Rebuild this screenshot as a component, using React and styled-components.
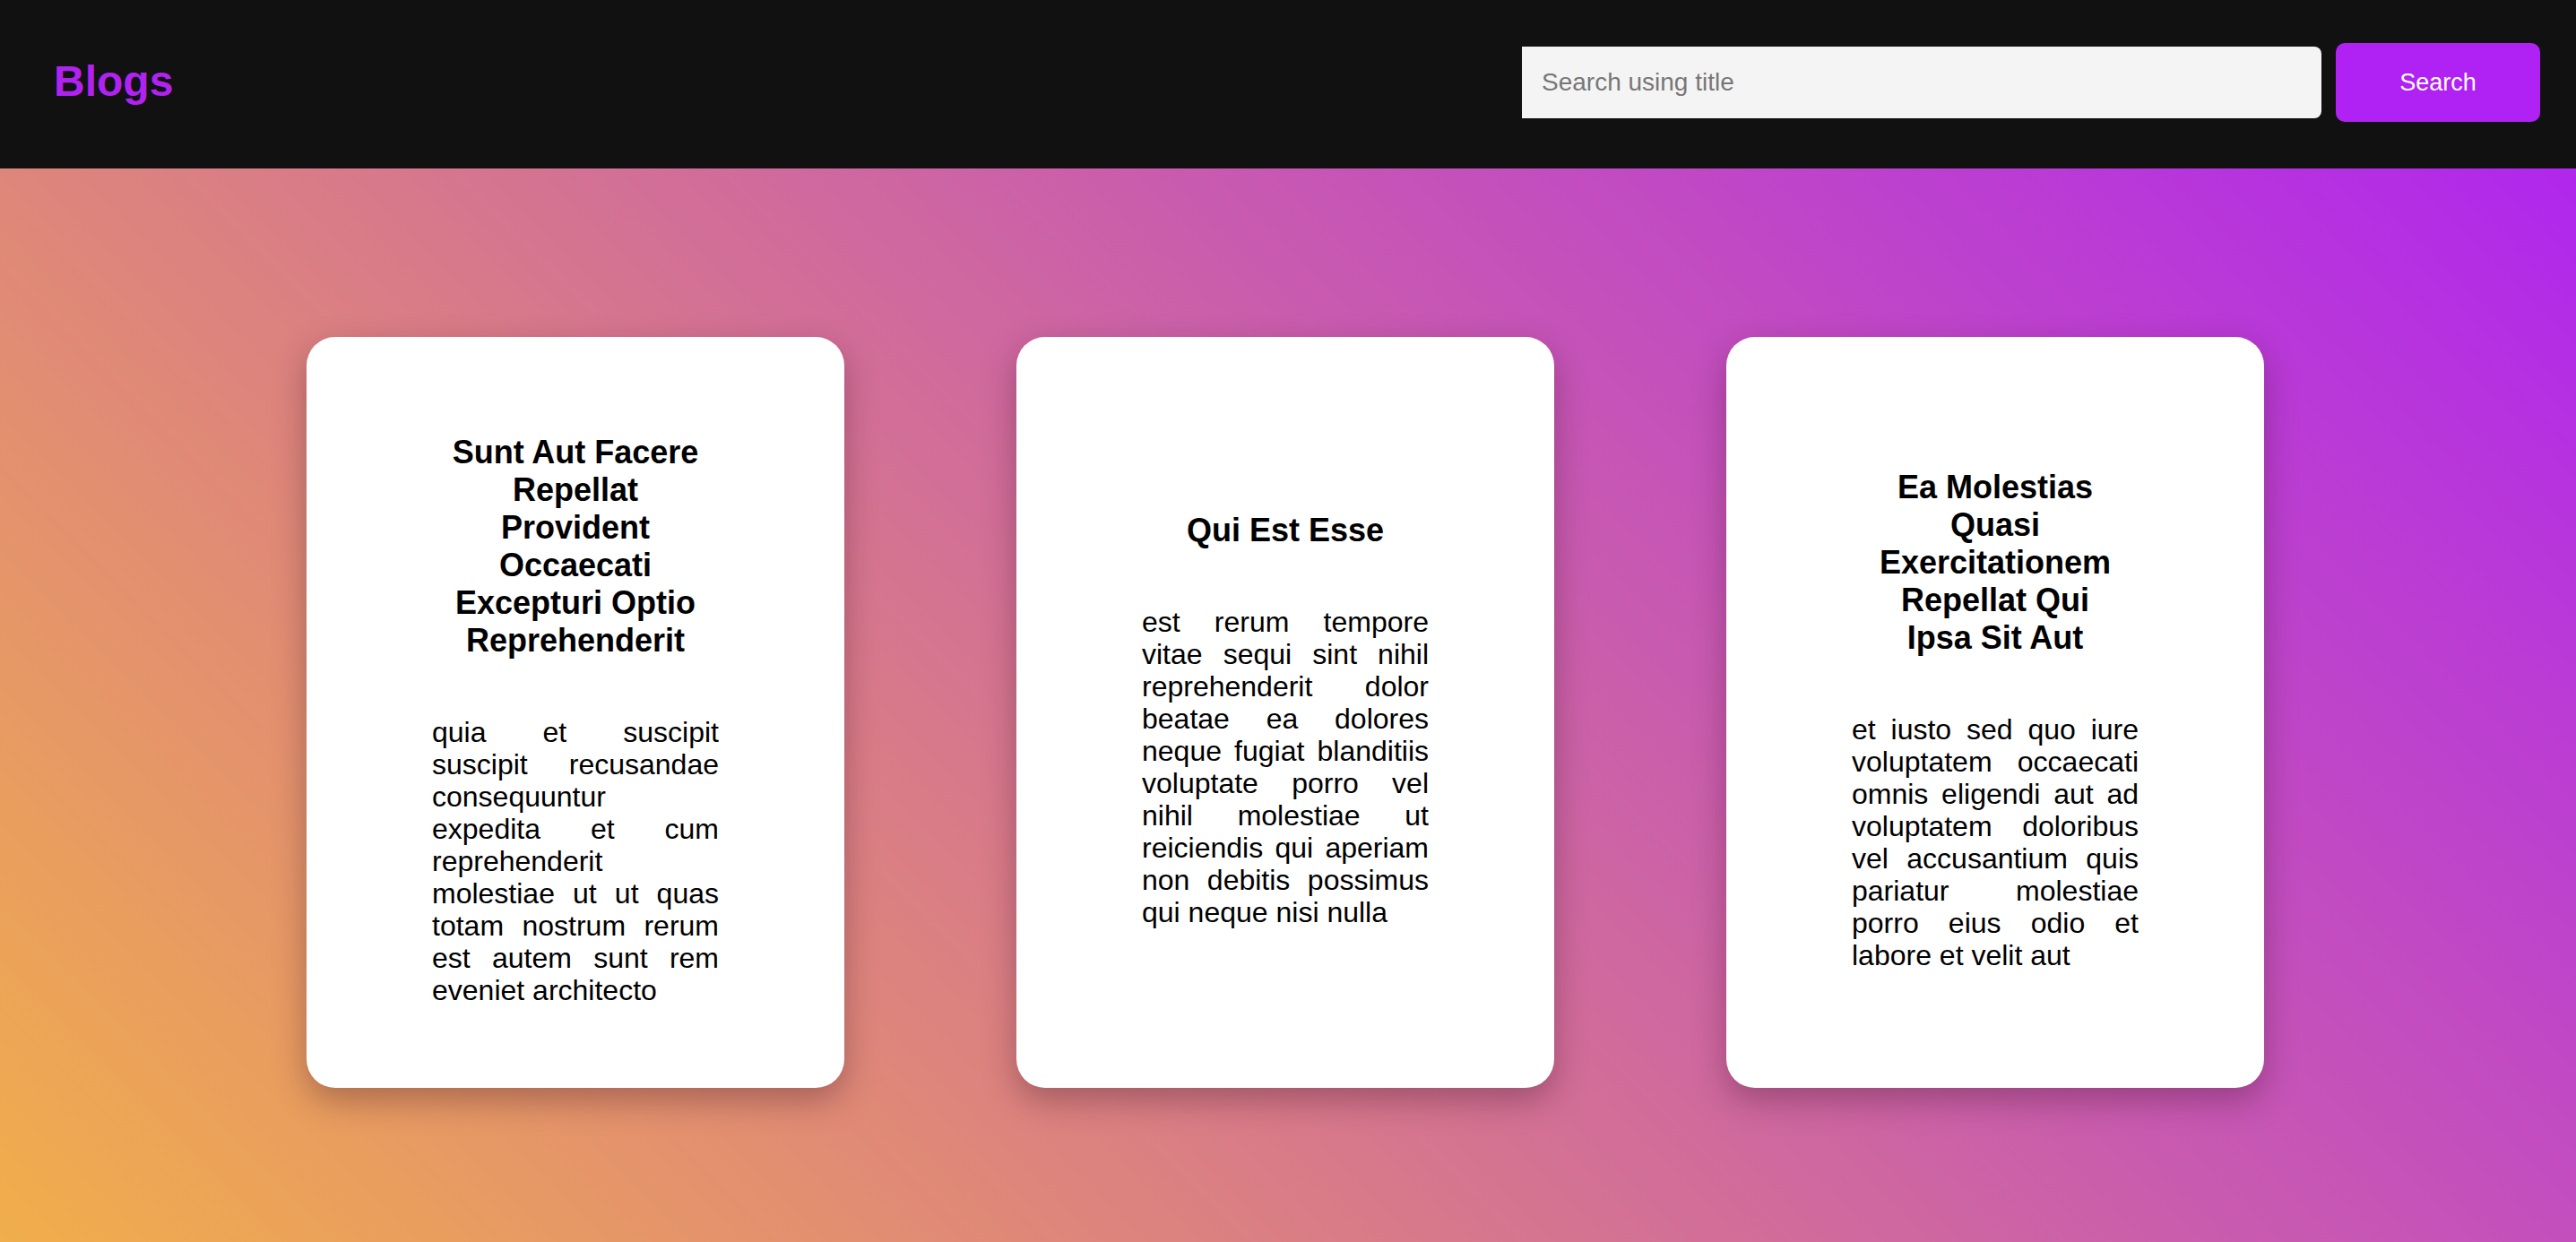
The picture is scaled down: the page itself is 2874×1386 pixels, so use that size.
import React from 'react';
import styled, { createGlobalStyle } from 'styled-components';

// Data
const posts = [
    {
        id: 1,
        title: 'Sunt Aut Facere Repellat Provident Occaecati Excepturi Optio Reprehenderit',
        body: 'quia et suscipit suscipit recusandae consequuntur expedita et cum reprehenderit molestiae ut ut quas totam nostrum rerum est autem sunt rem eveniet architecto',
    },
    {
        id: 2,
        title: 'Qui Est Esse',
        body: 'est rerum tempore vitae sequi sint nihil reprehenderit dolor beatae ea dolores neque fugiat blanditiis voluptate porro vel nihil molestiae ut reiciendis qui aperiam non debitis possimus qui neque nisi nulla',
    },
    {
        id: 3,
        title: 'Ea Molestias Quasi Exercitationem Repellat Qui Ipsa Sit Aut',
        body: 'et iusto sed quo iure voluptatem occaecati omnis eligendi aut ad voluptatem doloribus vel accusantium quis pariatur molestiae porro eius odio et labore et velit aut',
    },
];

// Styled
const GlobalStyle = createGlobalStyle`
    * {
        box-sizing: border-box;
    }

    body {
        margin: 0;
        font-family: 'Liberation Sans', Arial, Helvetica, sans-serif;
        background: #111111;
        overflow: hidden;
    }
`;

const Header = styled.header`
    height: 188px;
    background-color: #111111;
    display: flex;
    align-items: center;
    justify-content: space-between;
    padding: 0 40px 4px 60px;

    h1 {
        margin: 0 0 4px;
        color: #b022f0;
        font-size: 48px;
        font-weight: 700;
    }
`;

const SearchForm = styled.form`
    display: flex;
    align-items: center;
    column-gap: 16px;
`;

const SearchInput = styled.input`
    width: 892px;
    height: 80px;
    border: none;
    outline: none;
    border-radius: 0 8px 8px 0;
    background-color: #f4f4f4;
    padding: 0 22px;
    font-family: inherit;
    font-size: 28px;
    color: #222;

    &::placeholder {
        color: #777777;
    }
`;

const SearchButton = styled.button`
    width: 228px;
    height: 88px;
    border: none;
    border-radius: 10px;
    background-color: #b021f3;
    color: white;
    font-family: inherit;
    font-size: 27px;
    cursor: pointer;
`;

const Main = styled.main`
    height: calc(100vh - 188px);
    background: linear-gradient(45deg, #f1ae4b, #b027ed);
    padding-top: 188px;
`;

const CardsGrid = styled.div`
    display: flex;
    justify-content: center;
    column-gap: 192px;
    padding-right: 6px;
`;

const Card = styled.article`
    width: 600px;
    height: 838px;
    background-color: white;
    border-radius: 32px;
    padding: 0 140px;
    display: flex;
    flex-direction: column;
    justify-content: center;
    box-shadow: 0 14px 36px rgba(60, 20, 40, 0.35);

    .title {
        margin: 16px 20px 0;
        font-size: 36px;
        line-height: 42px;
        font-weight: 700;
        text-align: center;
        color: black;
    }

    .body {
        margin: 63px 0 0;
        font-size: 32px;
        line-height: 36px;
        text-align: justify;
        color: black;
    }
`;

const BlogCard = ({ post }) => {
    return (
        <Card>
            <h2 className='title'>{post.title}</h2>
            <p className='body'>{post.body}</p>
        </Card>
    );
};

const App = () => {
    return (
        <>
            <GlobalStyle />
            <Header>
                <h1>Blogs</h1>
                <SearchForm onSubmit={(e) => e.preventDefault()}>
                    <SearchInput type='text' placeholder='Search using title' />
                    <SearchButton type='submit'>Search</SearchButton>
                </SearchForm>
            </Header>
            <Main>
                <CardsGrid>
                    {posts.map((post) => (
                        <BlogCard key={post.id} post={post} />
                    ))}
                </CardsGrid>
            </Main>
        </>
    );
};

export default App;
